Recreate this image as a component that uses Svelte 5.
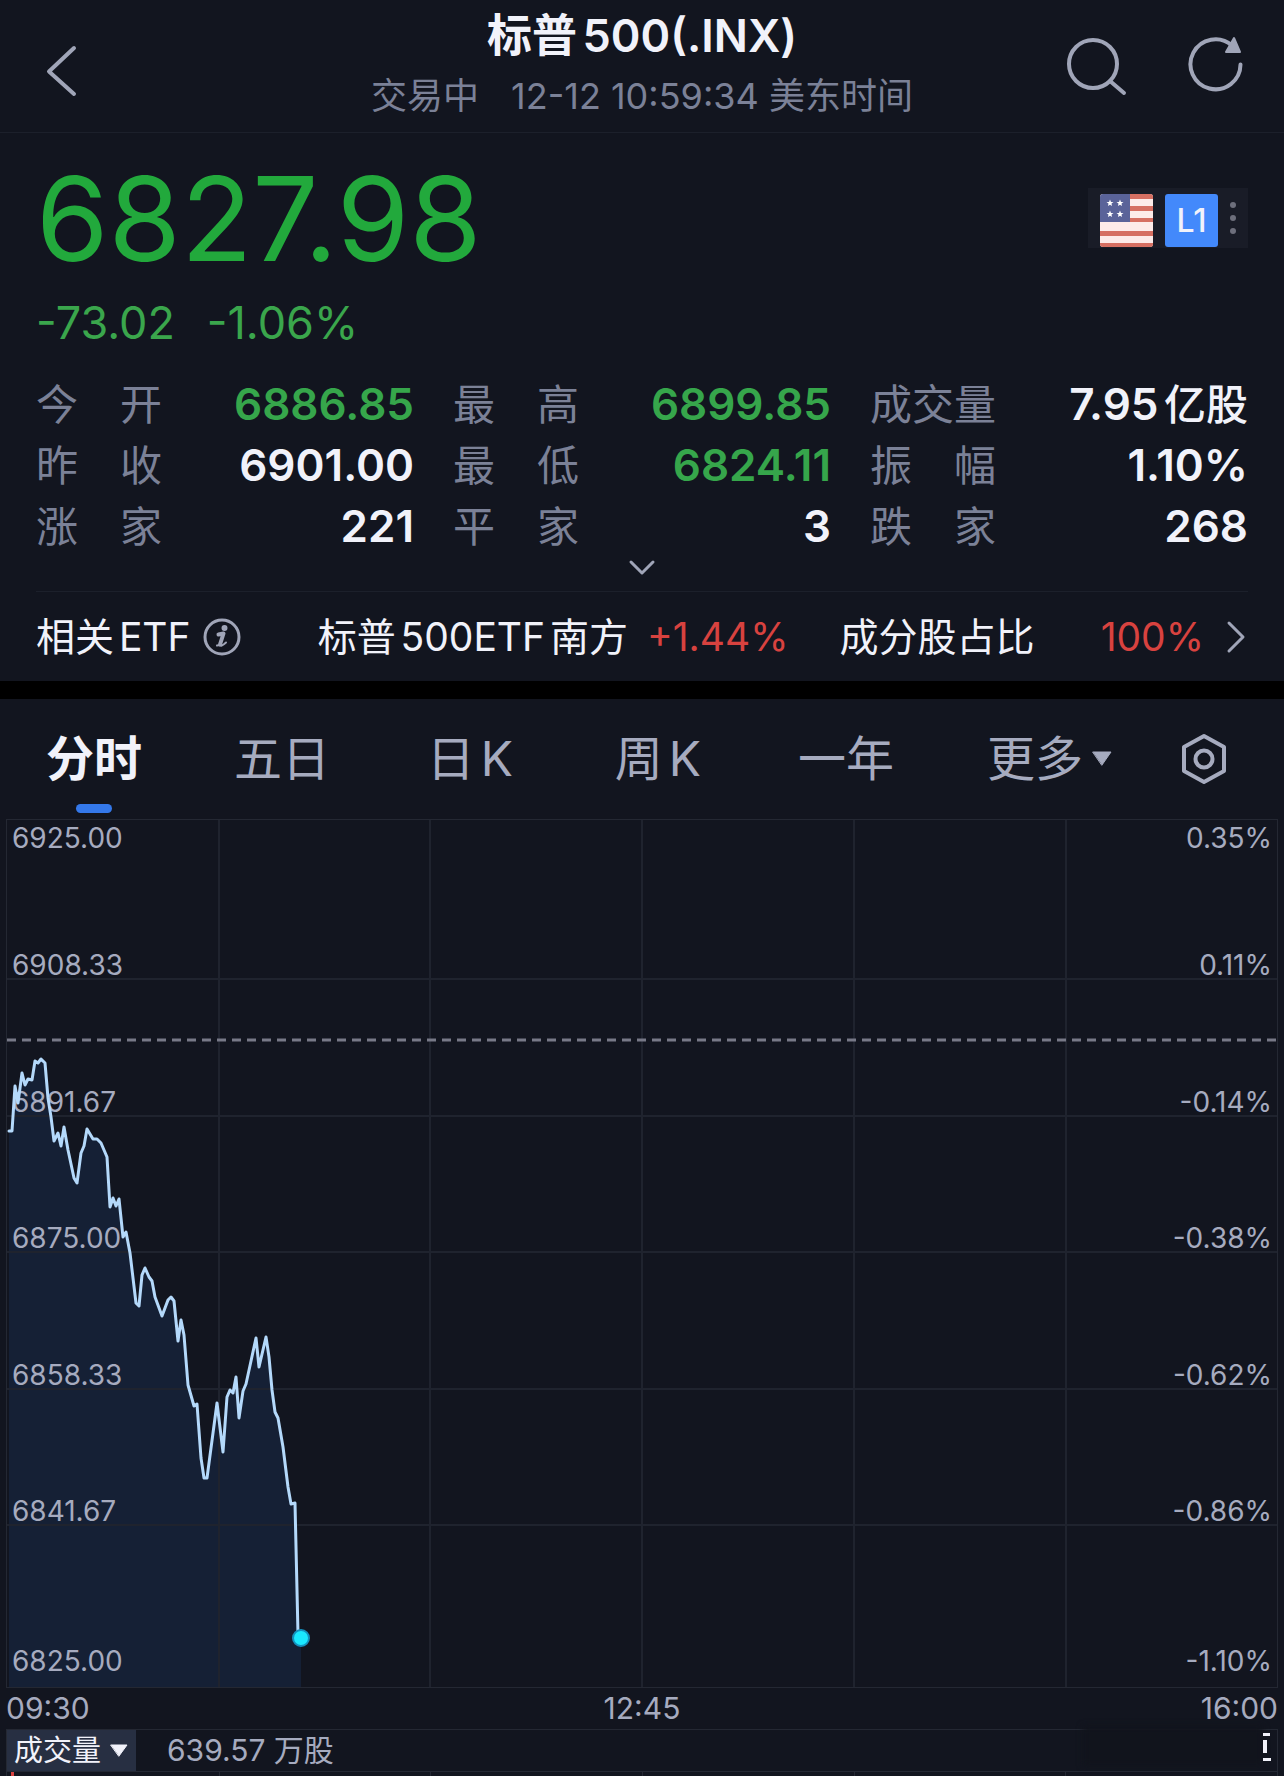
<script lang="ts">
	const stats = [
		{ label: '今开', value: '6886.85', down: true },
		{ label: '最高', value: '6899.85', down: true },
		{ label: '成交量', value: '7.95', unit: '亿股' },
		{ label: '昨收', value: '6901.00' },
		{ label: '最低', value: '6824.11', down: true },
		{ label: '振幅', value: '1.10%' },
		{ label: '涨家', value: '221' },
		{ label: '平家', value: '3' },
		{ label: '跌家', value: '268' }
	];

	const tabs = ['分时', '五日', '日K', '周K', '一年'];
	let active = $state('分时');

	const levels = [
		['6925.00', '0.35%'],
		['6908.33', '0.11%'],
		['6891.67', '-0.14%'],
		['6875.00', '-0.38%'],
		['6858.33', '-0.62%'],
		['6841.67', '-0.86%'],
		['6825.00', '-1.10%']
	];

	// chart space, the svg stretches it to the page width
	const W = 1270;
	const H = 867;
	const columns = [212, 423, 635, 847, 1059];
	const rows = [159, 296, 432, 569, 705];

	const points = [
		[2, 311], [5, 311], [8, 266], [11, 283], [15, 253], [18, 265], [21, 259], [25, 260],
		[28, 241], [31, 243], [34, 239], [38, 243], [41, 278], [44, 297], [47, 321], [51, 313],
		[54, 326], [57, 307], [61, 330], [67, 358], [70, 363], [74, 333], [77, 326], [80, 309],
		[86, 319], [90, 319], [94, 323], [100, 337], [103, 387], [106, 378], [109, 386], [112, 379],
		[116, 417], [119, 412], [123, 433], [129, 483], [132, 486], [135, 455], [138, 448], [142, 457],
		[145, 461], [148, 477], [155, 496], [161, 480], [164, 477], [167, 481], [171, 521], [174, 500],
		[177, 515], [181, 565], [187, 586], [190, 584], [194, 638], [197, 658], [200, 658], [210, 583],
		[216, 632], [220, 577], [223, 570], [226, 573], [229, 557], [232, 598], [236, 571], [239, 564],
		[249, 518], [252, 547], [259, 517], [262, 537], [265, 570], [268, 592], [271, 598], [276, 627],
		[281, 667], [284, 684], [288, 683], [291, 814]
	];
	const last = { x: 294, y: 818 };

	const line = points.map((p) => p.join(',')).join(' ');
	const area = `2,${H} ${line} ${last.x},${last.y} ${last.x},${H}`;
</script>

<main class="quote">
	<header>
		<button class="back" aria-label="返回">
			<svg width="32" height="52" viewBox="0 0 32 52">
				<path d="M29 3 4 26.500 29 49" />
			</svg>
		</button>
		<div class="heading">
			<h1>标普500(.INX)</h1>
			<p><span>交易中</span><time>12-12 10:59:34 美东时间</time></p>
		</div>
		<div class="tools">
			<button aria-label="搜索">
				<svg width="62" height="60" viewBox="0 0 62 60">
					<circle cx="27" cy="28" r="24" />
					<path d="M44 45 58 57" />
				</svg>
			</button>
			<button aria-label="刷新">
				<svg width="56" height="60" viewBox="0 0 56 60">
					<path d="M52.500 28.500A25 25 0 1 1 44 9.500" />
					<path class="solid" d="M46 2 52 16H38Z" />
				</svg>
			</button>
		</div>
	</header>

	<section class="summary">
		<div class="price-row">
			<strong>6827.98</strong>
			<div class="badges">
				<svg width="53" height="53" viewBox="0 0 53 53">
					<clipPath id="flag"><rect width="53" height="53" rx="3" /></clipPath>
					<g clip-path="url(#flag)">
						<rect width="53" height="53" fill="#fdebe9" />
						<path d="M30 0h23v5H30zM30 12h23v5H30zM30 24h23v4H30zM0 37h53v5H0zM0 49h53v4H0z" fill="#d66f62" />
						<rect width="30" height="28" fill="#5a6399" />
						{#each [[10, 9], [20, 9], [10, 20], [20, 20]] as [x, y]}
							<path
								transform="translate({x} {y})"
								d="M0-3.500 1-1 3.500-1 1.500 .6 2 3 0 1.700-2 3-1.500 .6-3.500-1-1-1Z"
								fill="#fff"
							/>
						{/each}
					</g>
				</svg>
				<span class="level">L1</span>
				<button aria-label="更多行情">
					<svg width="6" height="40" viewBox="0 0 6 40">
						<circle cx="3" cy="4" r="3" />
						<circle cx="3" cy="17" r="3" />
						<circle cx="3" cy="30" r="3" />
					</svg>
				</button>
			</div>
		</div>
		<p class="change"><span>-73.02</span><span>-1.06%</span></p>

		<dl>
			{#each stats as stat}
				<div>
					<dt>{#each stat.label as char}<span>{char}</span>{/each}</dt>
					<dd class:down={stat.down}>{stat.value}{#if stat.unit}<small>{stat.unit}</small>{/if}</dd>
				</div>
			{/each}
		</dl>
		<button class="expand" aria-label="展开">
			<svg width="28" height="18" viewBox="0 0 28 18"><path d="M3 3 14 14 25 3" /></svg>
		</button>

		<div class="etf">
			<span class="related">
				相关ETF
				<svg width="38" height="38" viewBox="0 0 38 38">
					<circle cx="19" cy="19" r="17" />
					<circle class="solid" cx="21.500" cy="10" r="2" />
					<path class="stem" d="M15.500 16.500 20.500 15.500 17 26.500" />
					<path d="M17 26.500Q17.500 29.500 23 24.500M14 27.500 17 27" stroke-width="2" />
				</svg>
			</span>
			<a class="fund" href="#etf">标普500ETF南方 <em>+1.44%</em></a>
			<a class="share" href="#share">
				成分股占比 <em>100%</em>
				<svg width="24" height="34" viewBox="0 0 24 34"><path d="M5 3 19 17 5 31" /></svg>
			</a>
		</div>
	</section>

	<nav>
		{#each tabs as tab}
			<button class:active={active === tab} onclick={() => (active = tab)}>{tab}</button>
		{/each}
		<button class="more" aria-haspopup="menu">
			更多
			<svg width="22" height="16" viewBox="0 0 22 16"><path d="M2 1H20L11 14Z" /></svg>
		</button>
		<button class="settings" aria-label="设置">
			<svg width="46" height="52" viewBox="0 0 46 52">
				<path d="M23 3 43 14V38L23 49 3 38V14Z" />
				<circle cx="23" cy="26" r="8.500" />
			</svg>
		</button>
	</nav>

	<section class="chart">
		<div class="plot">
			<svg viewBox="0 0 {W} {H}" preserveAspectRatio="none">
				<polygon class="area" points={area} />
				{#each columns as x}
					<line class="grid" x1={x} x2={x} y1="0" y2={H} />
				{/each}
				{#each rows as y}
					<line class="grid" x1="0" x2={W} y1={y} y2={y} />
				{/each}
				<line class="previous" x1="0" x2={W} y1="220" y2="220" />
			</svg>
			<div class="levels">
				{#each levels as [price, percent]}
					<p><span>{price}</span><span>{percent}</span></p>
				{/each}
			</div>
			<svg viewBox="0 0 {W} {H}" preserveAspectRatio="none">
				<polyline points={line} />
			</svg>
			<i class="dot" style="left: {(last.x / W) * 100}%; top: {(last.y / H) * 100}%"></i>
		</div>
		<div class="times">
			<span>09:30</span>
			<span>12:45</span>
			<span>16:00</span>
		</div>
	</section>

	<section class="volume">
		<div class="volume-head">
			<label>
				<select aria-label="指标">
					<option>成交量</option>
				</select>
				<svg width="20" height="14" viewBox="0 0 20 14"><path d="M2 1H18L10 12Z" /></svg>
			</label>
			<span>639.57 万股</span>
			<i class="shade"></i>
			<svg class="corner" width="8" height="28" viewBox="0 0 8 28">
				<path d="M0 1.500H7M0 26.500H8" />
				<path d="M2 7V20" stroke-width="4" />
			</svg>
		</div>
		<div class="bars">
			<i></i><i></i><i></i><i></i><i></i><i></i>
		</div>
	</section>
</main>

<style>
	:global(body) {
		background: #12151f;
	}

	.quote {
		display: flex;
		flex-direction: column;
		min-height: 100vh;
		background: #12151f;
		color: #f1f2fa;
		font-family: Inter, 'Noto Sans CJK SC', sans-serif;
		text-autospace: normal;
	}

	h1,
	p,
	dl,
	dd {
		margin: 0;
	}

	em {
		font-style: normal;
	}

	button,
	select {
		padding: 0;
		border: 0;
		background: none;
		color: inherit;
		font: inherit;
		text-autospace: inherit;
	}

	a {
		color: inherit;
		text-decoration: none;
	}

	svg {
		display: block;
		fill: none;
		stroke: #a0a5b8;
		stroke-width: 4;
		stroke-linecap: round;
		stroke-linejoin: round;
	}

	.solid {
		fill: #a0a5b8;
		stroke-width: 2;
	}

	header {
		display: grid;
		grid-template-columns: 1fr auto 1fr;
		padding: 4px 40px 8px;
		border-bottom: 1px solid #1c202b;
		text-align: center;
	}

	.back {
		align-self: center;
		justify-self: start;
		margin: 14px 0 0 5px;
	}

	h1 {
		font-size: 45px;
		font-weight: 600;
		line-height: 64px;
	}

	.heading p {
		display: flex;
		gap: 32px;
		color: #7b8197;
		font-size: 36px;
		line-height: 56px;
	}

	.tools {
		display: flex;
		align-items: center;
		justify-content: flex-end;
		gap: 60px;
		padding-top: 4px;
	}

	.summary {
		padding: 26px 36px 0;
		border-bottom: 18px solid #000;
	}

	.price-row {
		display: flex;
		justify-content: space-between;
		align-items: center;
		margin-bottom: 16px;
	}

	.price-row strong {
		color: #22a93c;
		font-size: 117px;
		font-weight: 400;
		line-height: 120px;
	}

	.badges {
		display: flex;
		align-items: center;
		gap: 12px;
		padding: 6px 12px 1px;
		margin-bottom: 2px;
		background: #191c27;
	}

	.badges svg {
		stroke: none;
	}

	.level {
		width: 53px;
		border-radius: 3px;
		background: #4389fb;
		font-size: 32px;
		font-weight: 500;
		line-height: 53px;
		text-align: center;
	}

	.badges circle {
		fill: #6d6f7c;
	}

	.change {
		display: flex;
		gap: 32px;
		margin-bottom: 23px;
		color: #3aa64c;
		font-size: 45px;
		line-height: 56px;
	}

	dl {
		display: grid;
		grid-template-columns: repeat(3, 1fr);
		column-gap: 39px;
		font-size: 42px;
		line-height: 61px;
	}

	dl div {
		display: flex;
		justify-content: space-between;
	}

	dt {
		display: flex;
		justify-content: space-between;
		width: 126px;
		color: #7b8197;
	}

	dd {
		font-size: 44px;
		font-weight: 600;
	}

	dd.down {
		color: #36a64b;
	}

	small {
		font-size: 42px;
		font-weight: 500;
	}

	.expand {
		display: block;
		margin: 2px auto 14px;
	}

	.expand svg {
		stroke-width: 3;
	}

	.etf {
		display: flex;
		justify-content: space-between;
		align-items: center;
		border-top: 1px solid #1c202b;
		font-size: 39px;
		line-height: 89px;
	}

	.etf svg {
		stroke-width: 3;
	}

	.etf .stem {
		stroke-width: 4;
	}

	.etf em {
		margin-left: 8px;
		color: #d8423f;
	}

	.related,
	.share {
		display: flex;
		align-items: center;
		gap: 12px;
	}

	.fund {
		margin-left: 26px;
	}

	.share {
		gap: 20px;
	}

	.share em {
		margin-left: 46px;
	}

	nav {
		display: grid;
		grid-template-columns: repeat(5, 188fr) 220fr 88fr;
		padding-right: 36px;
		color: #a6abbf;
		font-size: 48px;
		line-height: 120px;
	}

	nav svg {
		stroke: #a6abbf;
	}

	.active {
		position: relative;
		color: #f1f2fa;
		font-weight: 600;
	}

	.active::after {
		content: '';
		position: absolute;
		bottom: 6px;
		left: 50%;
		width: 36px;
		height: 9px;
		margin-left: -18px;
		border-radius: 5px;
		background: #3478ea;
	}

	.more {
		display: flex;
		justify-content: center;
		align-items: center;
		gap: 8px;
	}

	.more svg {
		fill: #a6abbf;
		stroke-width: 1;
	}

	.settings {
		display: flex;
		justify-content: center;
		align-items: center;
	}

	.chart,
	.volume {
		margin: 0 6px;
		color: #a6abbf;
	}

	.plot {
		position: relative;
		border: 1px solid #242833;
	}

	.plot > svg {
		position: absolute;
		inset: 0;
		width: 100%;
		height: 100%;
	}

	.area {
		fill: #152035;
		stroke: none;
	}

	.grid {
		stroke: #1f232e;
		stroke-width: 2;
		vector-effect: non-scaling-stroke;
	}

	.previous {
		stroke: #777987;
		stroke-width: 3;
		stroke-dasharray: 9 6;
		stroke-linecap: butt;
		vector-effect: non-scaling-stroke;
	}

	polyline {
		stroke: #b4d9fb;
		stroke-width: 3;
		vector-effect: non-scaling-stroke;
	}

	.levels {
		position: relative;
		display: grid;
		grid-template-rows: 34px 127px repeat(4, 1fr) 160px;
		height: 867px;
		padding: 0 5px;
		font-size: 28px;
		line-height: 32px;
	}

	.levels p {
		display: flex;
		justify-content: space-between;
		align-items: flex-end;
	}

	.levels p:last-child {
		padding-bottom: 10px;
	}

	.dot {
		position: absolute;
		width: 14px;
		height: 14px;
		margin: -9px;
		border: 2px solid #1490bd;
		border-radius: 50%;
		background: #1ae8fe;
	}

	.times {
		display: grid;
		grid-template-columns: 1fr auto 1fr;
		font-size: 30px;
		line-height: 41px;
	}

	.times span:last-child {
		text-align: right;
	}

	.volume {
		display: flex;
		flex: 1;
		flex-direction: column;
		border: 1px solid #242833;
		border-bottom: 0;
	}

	.volume-head {
		position: relative;
		display: flex;
		gap: 31px;
		border-bottom: 1px solid #242833;
		font-size: 30px;
		line-height: 41px;
	}

	label {
		display: flex;
		align-items: center;
		gap: 7px;
		padding: 0 7px;
		background: #272f42;
		color: #f1f2fa;
	}

	select {
		appearance: none;
		font-size: 29px;
		line-height: 40px;
	}

	label svg {
		fill: #f1f2fa;
		stroke: #f1f2fa;
		stroke-width: 1;
	}

	.shade {
		position: absolute;
		top: -4px;
		right: 14px;
		width: 180px;
		height: 40px;
		background: #11141c;
		filter: blur(3px);
	}

	.corner {
		position: absolute;
		top: 3px;
		right: 6px;
		stroke: #f1f2fa;
		stroke-width: 3;
		stroke-linecap: butt;
	}

	.bars {
		display: grid;
		flex: 1;
		grid-template-columns: repeat(6, 1fr);
		min-height: 4px;
	}

	.bars i + i {
		border-left: 1px solid #242833;
	}

	.bars i:first-child {
		width: 3px;
		margin-left: 4px;
		background: #d8423f;
	}
</style>
